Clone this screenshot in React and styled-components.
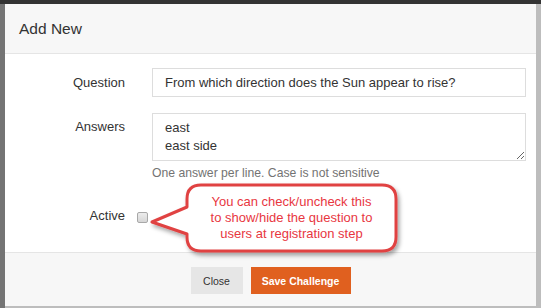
import React from 'react';
import styled, { createGlobalStyle } from 'styled-components';

const Global = createGlobalStyle`
  html, body { margin: 0; padding: 0; }
  body { font-family: "Liberation Sans", Arial, sans-serif; color: #333; }
`

const Backdrop = styled.div`
  width: 541px;
  height: 308px;
  box-sizing: border-box;
  padding: 0 5px 2px 5px;
  background: linear-gradient(to right, #747474 0 5px, #bdbdbd 5px);
  border-top: 4px solid #333;
  overflow: hidden;
`

const Modal = styled.div`
  width: 531px;
  height: 302px;
  background: #fff;
  display: flex;
  flex-direction: column;
`

const Header = styled.div`
  height: 49px;
  border-bottom: 1px solid #e5e5e5;
  background: #f7f7f7;
  display: flex;
  align-items: center;
  padding-left: 14px;
`

const Title = styled.h4`
  margin: 0;
  font-size: 15.5px;
  font-weight: normal;
  color: #333;
`

const Body = styled.div`
  position: relative;
  height: 198px;
  box-sizing: border-box;
  padding: 14px 10px 0 0;
`

const Row = styled.div`
  display: grid;
  grid-template-columns: 120px ${p => p.$inline ? 'auto' : '1fr'};
  column-gap: ${p => p.$gap || 27}px;
  align-items: ${p => p.$top ? 'start' : 'center'};
  margin-top: ${p => p.$mt || 0}px;
  justify-content: start;
`

const Label = styled.label`
  text-align: right;
  font-size: 13px;
  line-height: 16px;
  color: #333;
  padding-top: ${p => p.$pt || 0}px;
`

const Input = styled.input`
  height: 29px;
  box-sizing: border-box;
  border: 1px solid #ddd;
  padding: 0 12px;
  font-family: inherit;
  font-size: 13px;
  color: #333;
  outline: none;
  width: 100%;
`

const TextArea = styled.textarea`
  height: 48px;
  box-sizing: border-box;
  border: 1px solid #ddd;
  padding: 5px 12px;
  font-family: inherit;
  font-size: 13px;
  line-height: 18px;
  color: #333;
  outline: none;
  width: 100%;
  display: block;
`

const Help = styled.div`
  font-size: 12.2px;
  line-height: 15px;
  color: #737373;
  margin-top: 5px;
`

const Check = styled.input`
  appearance: none;
  margin: 0;
  width: 11px;
  height: 11px;
  border: 1px solid #a8a8a8;
  border-radius: 2px;
  background: linear-gradient(#ececec, #d6d6d6);
  margin-top: 2px;
`

const Callout = styled.div`
  position: absolute;
  left: 145px;
  top: 129px;
  width: 254px;
  height: 78px;
`

const Bubble = styled.svg`
  position: absolute;
  left: 0;
  top: 0;
  overflow: visible;
`

const CalloutText = styled.div`
  position: absolute;
  left: 37px;
  top: 2px;
  width: 209px;
  height: 66px;
  display: flex;
  align-items: center;
  justify-content: center;
  text-align: center;
  font-size: 13px;
  line-height: 16px;
  color: #e8373f;
`

const Footer = styled.div`
  flex: 1;
  border-top: 1px solid #e5e5e5;
  background: #f7f7f7;
  display: flex;
  justify-content: center;
  align-items: flex-start;
  gap: 8px;
  padding-top: 14px;
`

const Button = styled.button`
  height: 27px;
  width: ${p => p.$primary ? 100 : 52}px;
  border: none;
  border-radius: 0;
  padding: 0;
  font-family: inherit;
  font-size: 10.5px;
  font-weight: ${p => p.$primary ? 'bold' : 'normal'};
  background: ${p => p.$primary ? '#e0601f' : '#e6e6e6'};
  color: ${p => p.$primary ? '#fff' : '#333'};
`

function App() {
    return (
        <Backdrop>
            <Global />
            <Modal>
                <Header>
                    <Title>Add New</Title>
                </Header>
                <Body>
                    <Row>
                        <Label>Question</Label>
                        <Input defaultValue="From which direction does the Sun appear to rise?" />
                    </Row>
                    <Row $top $mt={16}>
                        <Label $pt={6}>Answers</Label>
                        <div>
                            <TextArea defaultValue={'east\neast side'} />
                            <Help>One answer per line. Case is not sensitive</Help>
                        </div>
                    </Row>
                    <Row $inline $gap={12} $mt={27}>
                        <Label>Active</Label>
                        <Check type="checkbox" />
                    </Row>
                    <Callout>
                        <Bubble width="254" height="78" viewBox="0 0 254 78">
                            <defs>
                                <filter id="sh" x="-10%" y="-10%" width="130%" height="140%">
                                    <feDropShadow dx="2" dy="3" stdDeviation="2" floodColor="#000" floodOpacity="0.35" />
                                </filter>
                            </defs>
                            <path
                                d="M51 2 H232 Q246 2 246 16 V54 Q246 68 232 68 H51 Q37 68 37 54 L37 51 L2 39 L37 24 V16 Q37 2 51 2 Z"
                                fill="#fff"
                                stroke="#e04343"
                                strokeWidth="3"
                                strokeLinejoin="round"
                                filter="url(#sh)"
                            />
                        </Bubble>
                        <CalloutText>
                            You can check/uncheck this<br />
                            to show/hide the question to<br />
                            users at registration step
                        </CalloutText>
                    </Callout>
                </Body>
                <Footer>
                    <Button>Close</Button>
                    <Button $primary>Save Challenge</Button>
                </Footer>
            </Modal>
        </Backdrop>
    );
}

export default App;
